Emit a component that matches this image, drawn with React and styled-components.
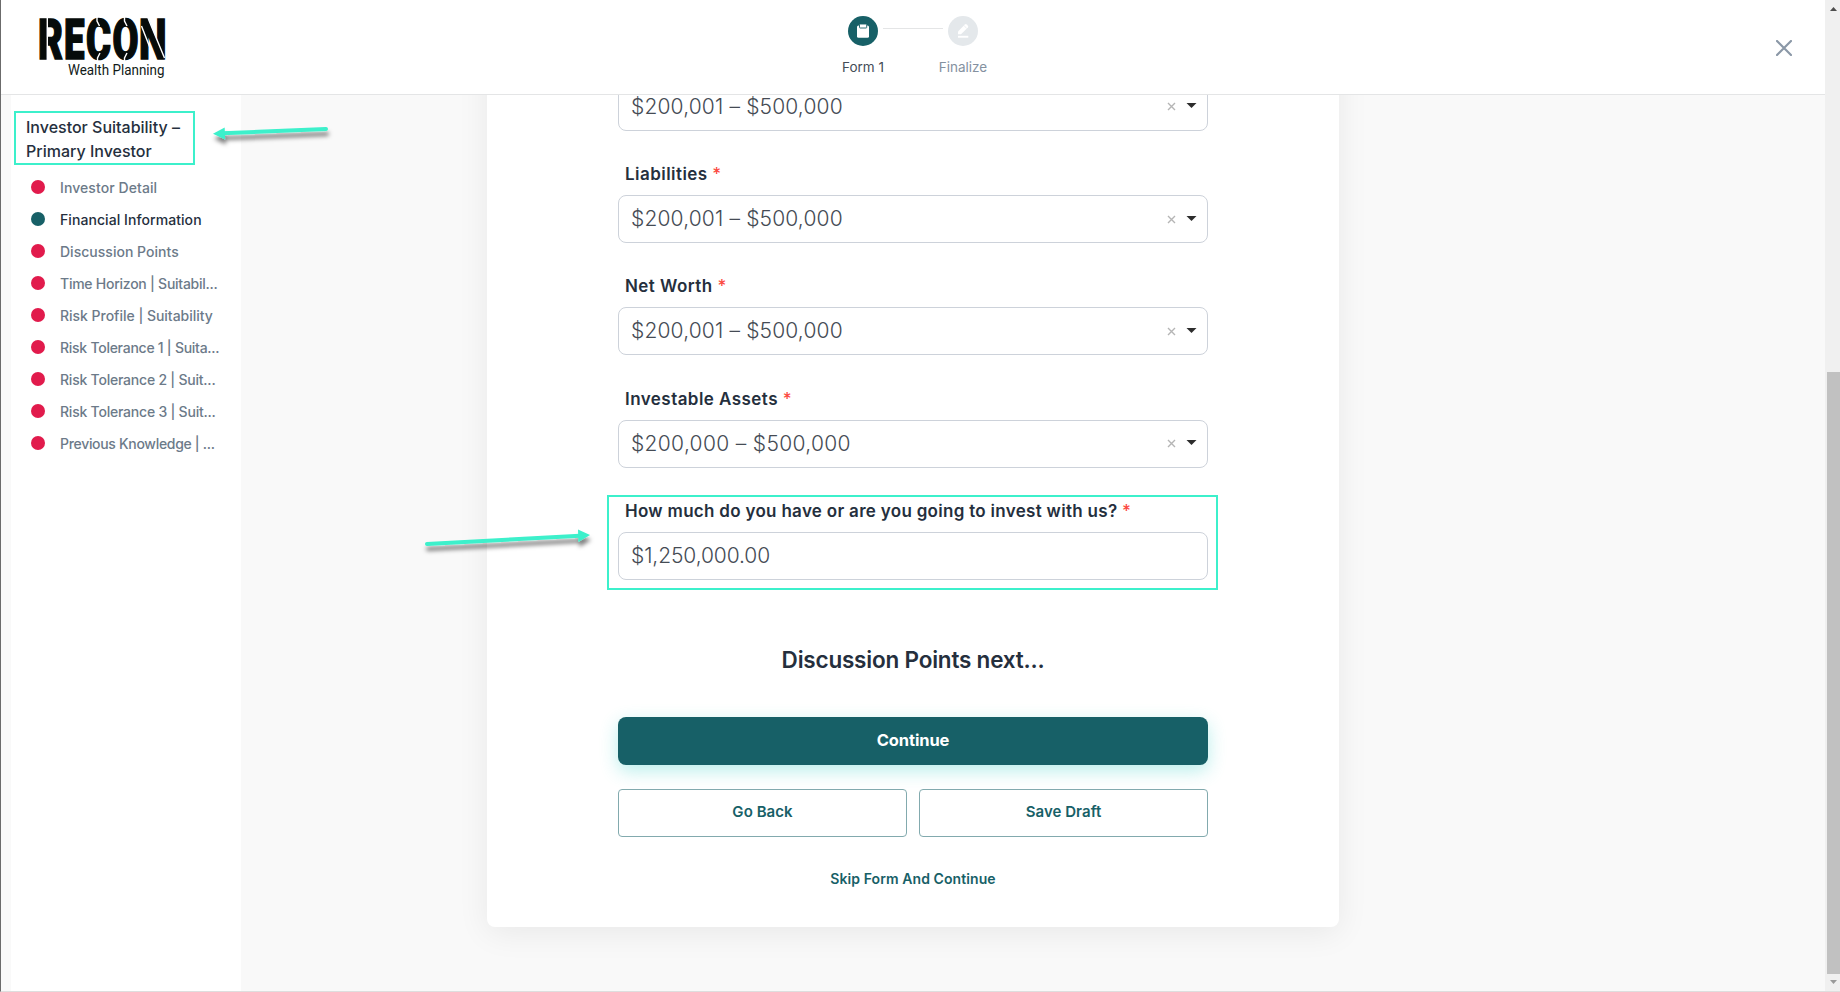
import React from 'react';
import styled, { createGlobalStyle } from 'styled-components';

const GlobalStyle = createGlobalStyle`
  * {
    box-sizing: border-box;
  }

  body {
    margin: 0;
    overflow: hidden;
    font-family: Inter, 'Open Sans', sans-serif;
    color: #252f3d;
  }

  button {
    font-family: inherit;
    cursor: pointer;
  }
`;

const Window = styled.div`
  position: relative;
  display: flex;
  width: 1840px;
  height: 992px;
  background: #f9f9f9;
  border-left: 1px solid #6b6b6b;
  border-bottom: 1px solid #dedede;
  overflow: hidden;
`;

const Page = styled.div`
  flex: 1;
  display: flex;
  flex-direction: column;
  min-width: 0;
`;

const Header = styled.header`
  display: grid;
  grid-template-columns: 1fr auto 1fr;
  flex: none;
  height: 95px;
  padding: 0 33px;
  background: #fff;
  border-bottom: 1px solid #e4e5e6;
`;

const Logo = styled.svg`
  display: block;
  margin: 16px 0 0 4px;
  overflow: visible;
`;

const Steps = styled.div`
  display: flex;
  padding-top: 16px;
`;

const Step = styled.div`
  display: flex;
  flex-direction: column;
  align-items: center;
  width: 60px;
  font-size: 13.5px;
  line-height: 20px;
  color: ${({ $active }) => ($active ? '#444c57' : '#8491a0')};
`;

const StepIcon = styled.div`
  display: flex;
  width: 30px;
  height: 30px;
  margin-bottom: 11px;
  border-radius: 50%;
  background: ${({ $active }) => ($active ? '#176067' : '#e4e8eb')};
`;

const StepLine = styled.div`
  width: 60px;
  height: 1px;
  margin: 12px -10px 0;
  background: #e4e5e6;
`;

const CloseButton = styled.button`
  justify-self: end;
  align-self: start;
  width: 16px;
  height: 16px;
  margin-top: 40px;
  padding: 0;
  border: 0;
  background: none;

  svg {
    display: block;
  }
`;

const Body = styled.div`
  flex: 1;
  display: flex;
  min-height: 0;
`;

const Sidebar = styled.aside`
  flex: none;
  width: 230px;
  margin-left: 10px;
  background: #fff;
`;

const SidebarTitle = styled.div`
  width: 181px;
  height: 54px;
  margin: 16px 0 6px 3px;
  padding: 2px 0 0 10px;
  border: 2px solid #3cf0cb;
  font-size: 16px;
  font-weight: 500;
  line-height: 24px;
  white-space: nowrap;
`;

const NavList = styled.ul`
  margin: 0;
  padding: 0;
  list-style: none;
`;

const NavItem = styled.li`
  display: flex;
  align-items: center;
  gap: 15px;
  height: 32px;
  padding-left: 20px;
  font-size: 14px;
  font-weight: 500;
  white-space: nowrap;
  letter-spacing: ${({ $spacing }) => $spacing}px;
  color: ${({ $active }) => ($active ? '#252f3d' : '#6c7a89')};

  &::before {
    content: '';
    width: 14px;
    height: 14px;
    border-radius: 50%;
    background: ${({ $active }) => ($active ? '#176067' : '#e11b4c')};
  }
`;

/* Content is anchored to the bottom, as when scrolled all the way down */
const Content = styled.main`
  flex: 1;
  display: flex;
  flex-direction: column;
  justify-content: flex-end;
  align-items: flex-start;
  padding: 0 0 64px 246px;
  overflow: hidden;
`;

const Card = styled.section`
  flex: none;
  width: 852px;
  padding: 40px 131px 38px;
  border-radius: 8px;
  background: #fff;
  box-shadow: 0 6px 32px rgba(0, 0, 0, 0.07);
`;

const Field = styled.div`
  position: relative;
  margin-bottom: ${({ $last }) => ($last ? 0 : '31.33px')};
`;

const Label = styled.label`
  display: block;
  margin: 0 0 9px 7px;
  font-size: 17px;
  font-weight: 600;
  line-height: 24px;
  white-space: nowrap;
  letter-spacing: ${({ $spacing }) => $spacing || 0.45}px;
`;

const Required = styled.span`
  color: #fb4a42;
  font-weight: 500;
`;

const Control = styled.div`
  display: flex;
  align-items: center;
  height: 48px;
  padding: 0 10px 1px 12px;
  border: 1px solid #cdd2da;
  border-radius: 8px;
  font-size: 21px;
  font-weight: 300;
  letter-spacing: ${({ $spacing }) => $spacing || 0}px;
  color: #454b54;
`;

const SelectIcons = styled.svg`
  display: block;
  margin-left: auto;
`;

const Highlight = styled.div`
  position: absolute;
  inset: -4px -10px -10px -11px;
  border: 2px solid #3cf0cb;
  pointer-events: none;
`;

const NextTitle = styled.h2`
  margin: 64px 0 41px;
  font-size: 22.5px;
  font-weight: 600;
  line-height: 32px;
  letter-spacing: -0.2px;
  text-align: center;
`;

const PrimaryButton = styled.button`
  display: block;
  width: 100%;
  height: 48px;
  padding: 0 0 2px;
  border: 0;
  border-radius: 8px;
  background: #176067;
  box-shadow: 0 6px 18px rgba(40, 205, 195, 0.32);
  font-size: 16.5px;
  font-weight: 700;
  letter-spacing: -0.1px;
  color: #fff;
`;

const ButtonRow = styled.div`
  display: flex;
  gap: 12px;
  margin-top: 24px;
`;

const OutlineButton = styled.button`
  flex: 1;
  height: 48px;
  padding: 0 0 3px;
  border: 1px solid #82aaae;
  border-radius: 4px;
  background: #fff;
  font-size: 15px;
  font-weight: 600;
  letter-spacing: 0.05px;
  color: #176067;
`;

const SkipLink = styled.button`
  display: block;
  margin: 32px auto 0;
  padding: 0;
  border: 0;
  background: none;
  font-size: 14px;
  font-weight: 600;
  line-height: 20px;
  letter-spacing: 0.08px;
  color: #176067;
`;

const Scrollbar = styled.div`
  flex: none;
  display: flex;
  flex-direction: column;
  align-items: flex-end;
  width: 15px;
  background: #f0f0f0;
`;

const ScrollArrow = styled.svg`
  display: block;
  flex: none;
`;

const Thumb = styled.div`
  width: 13px;
  height: 602px;
  margin-top: auto;
  background: #c1c1c1;
`;

const Overlay = styled.svg`
  position: absolute;
  top: 0;
  left: -1px;
  pointer-events: none;
`;

const selects = [
  { label: 'Assets', value: '$200,001 – $500,000', spacing: 0.15 },
  { label: 'Liabilities', value: '$200,001 – $500,000', spacing: 0.15 },
  { label: 'Net Worth', value: '$200,001 – $500,000', spacing: 0.15 },
  { label: 'Investable Assets', value: '$200,000 – $500,000', spacing: 0.33 },
];

const sections = [
  { name: 'Investor Detail', spacing: 0.08 },
  { name: 'Financial Information', spacing: 0.07, active: true },
  { name: 'Discussion Points', spacing: 0.02 },
  { name: 'Time Horizon | Suitabil...', spacing: -0.25 },
  { name: 'Risk Profile | Suitability', spacing: -0.02 },
  { name: 'Risk Tolerance 1 | Suita...', spacing: -0.26 },
  { name: 'Risk Tolerance 2 | Suit...', spacing: -0.22 },
  { name: 'Risk Tolerance 3 | Suit...', spacing: -0.22 },
  { name: 'Previous Knowledge | ...', spacing: -0.31 },
];

const logoLetters = [
  { letter: 'R', x: 38, width: 25 },
  { letter: 'E', x: 64, width: 20.5 },
  { letter: 'C', x: 86, width: 25 },
  { letter: 'O', x: 112.5, width: 26 },
  { letter: 'N', x: 139, width: 27.5 },
];

const BrandLogo = () => (
  <Logo width="130" height="66" viewBox="38 16 130 66">
    <g
      fontFamily="Roboto, sans-serif"
      fontWeight="900"
      fontSize="55.5"
      fill="#060b0a"
      stroke="#060b0a"
      strokeWidth="1.6"
    >
      {logoLetters.map(({ letter, x, width }) => (
        <text key={letter} x={x} y="59.2" textLength={width} lengthAdjust="spacingAndGlyphs">
          {letter}
        </text>
      ))}
    </g>
    {/* stencil cuts */}
    <g stroke="#fff" strokeWidth="1.4" fill="none">
      <path d="M47.3 18v44" />
      <path d="M97 17v4l2.500 5M97.500 62v-4l2.500-5" />
      <path d="M124.500 17v4l2.500 5M124.500 62v-4l2.500-5" />
      <path d="M148 18l16.500 40M141.500 26l14 36" />
    </g>
    <text
      x="68"
      y="75"
      fontFamily="Roboto, sans-serif"
      fontSize="15"
      textLength="96.500"
      lengthAdjust="spacingAndGlyphs"
      fill="#111a18"
    >
      Wealth Planning
    </text>
  </Logo>
);

const ClipboardIcon = () => (
  <svg width="30" height="30" viewBox="0 0 30 30">
    <rect x="9" y="9.500" width="12" height="12.300" rx="1.500" fill="#fff" />
    <rect x="11.500" y="8" width="7.200" height="4" rx=".6" fill="#fff" stroke="#176067" strokeWidth=".9" />
  </svg>
);

const PenIcon = () => (
  <svg width="30" height="30" viewBox="0 0 30 30" fill="#fff">
    <path d="M10 15.400l6.900-6.900a1.300 1.300 0 0 1 1.800 0l1.200 1.200a1.300 1.300 0 0 1 0 1.800L13 18.300H10z" />
    <path d="M16.200 9.800l2.400 2.400" stroke="#e4e8eb" strokeWidth=".8" />
    <rect x="10" y="19.800" width="10.300" height="1.900" />
  </svg>
);

const SelectField = ({ label, value, spacing }) => (
  <Field>
    <Label>
      {label} <Required>*</Required>
    </Label>
    <Control $spacing={spacing}>
      {value}
      <SelectIcons width="30" height="12" viewBox="0 0 30 12">
        <path d="M1 3l7 7M8 3l-7 7" stroke="#b5b5b5" strokeWidth="1.400" />
        <path d="M19.500 3h10l-5 5z" fill="#2d2d2d" />
      </SelectIcons>
    </Control>
  </Field>
);

const Arrows = () => (
  <Overlay width="700" height="600">
    <defs>
      <filter id="arrowShadow" x="-10%" y="-100%" width="120%" height="400%">
        <feDropShadow dx="1" dy="5" stdDeviation="2" floodColor="#000" floodOpacity="0.5" />
      </filter>
    </defs>
    <g fill="#3cf0cb" stroke="#3cf0cb" filter="url(#arrowShadow)">
      <path d="M326 129L222 133.300" strokeWidth="4" strokeLinecap="round" />
      <path d="M213 133.700l11.700-6.300.4 12z" stroke="none" />
    </g>
    <g fill="#3cf0cb" stroke="#3cf0cb" filter="url(#arrowShadow)">
      <path d="M427 544L580 535.700" strokeWidth="4" strokeLinecap="round" />
      <path d="M590 535l-12-5.500.4 12.400z" stroke="none" />
    </g>
  </Overlay>
);

const App = () => {
  return (
    <>
      <GlobalStyle />
      <Window>
        <Page>
          <Header>
            <BrandLogo />
            <Steps>
              <Step $active>
                <StepIcon $active>
                  <ClipboardIcon />
                </StepIcon>
                Form 1
              </Step>
              <StepLine />
              <Step>
                <StepIcon>
                  <PenIcon />
                </StepIcon>
                Finalize
              </Step>
            </Steps>
            <CloseButton aria-label="Close">
              <svg width="16" height="16" viewBox="0 0 16 16">
                <path d="M1 1l14 14M15 1L1 15" stroke="#8b98a7" strokeWidth="2.200" strokeLinecap="round" />
              </svg>
            </CloseButton>
          </Header>

          <Body>
            <Sidebar>
              <SidebarTitle>
                Investor Suitability –
                <br />
                Primary Investor
              </SidebarTitle>
              <NavList>
                {sections.map(({ name, spacing, active }) => (
                  <NavItem key={name} $spacing={spacing} $active={active}>
                    {name}
                  </NavItem>
                ))}
              </NavList>
            </Sidebar>

            <Content>
              <Card>
                {selects.map((item) => (
                  <SelectField key={item.label} {...item} />
                ))}
                <Field $last>
                  <Highlight />
                  <Label $spacing={0.3}>
                    How much do you have or are you going to invest with us? <Required>*</Required>
                  </Label>
                  <Control $spacing={-0.1}>$1,250,000.00</Control>
                </Field>

                <NextTitle>Discussion Points next...</NextTitle>
                <PrimaryButton>Continue</PrimaryButton>
                <ButtonRow>
                  <OutlineButton>Go Back</OutlineButton>
                  <OutlineButton>Save Draft</OutlineButton>
                </ButtonRow>
                <SkipLink>Skip Form And Continue</SkipLink>
              </Card>
            </Content>
          </Body>
        </Page>

        <Scrollbar>
          <ScrollArrow width="13" height="18" viewBox="0 0 13 18">
            <path d="M3 11l3.500-4 3.500 4z" fill="#4d4d4d" />
          </ScrollArrow>
          <Thumb />
          <ScrollArrow width="13" height="17" viewBox="0 0 13 17">
            <path d="M3 6h7l-3.500 4z" fill="#9a9a9a" />
          </ScrollArrow>
        </Scrollbar>
        <Arrows />
      </Window>
    </>
  );
};

export default App;
